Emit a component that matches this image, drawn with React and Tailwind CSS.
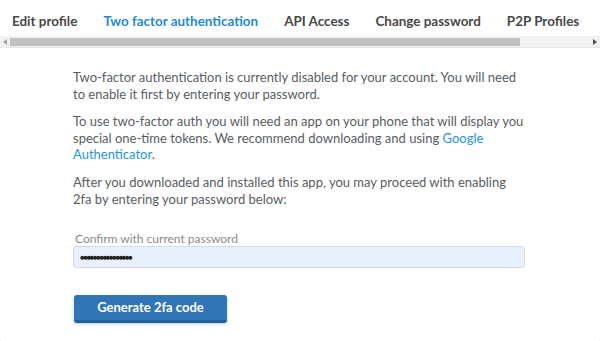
const tabs = [
  { label: "Edit profile" },
  { label: "Two factor authentication", active: true },
  { label: "API Access" },
  { label: "Change password" },
  { label: "P2P Profiles" },
];

export default function App() {
  return (
    <div className="w-[600px] h-[341px] bg-[#eeeeee] overflow-hidden" style={{ fontFamily: "Lato, 'Noto Sans', sans-serif" }}>
      <div className="h-full bg-white rounded-b-[3px] flex flex-col">
        {/* tab strip */}
        <div className="h-[36px] pt-[7px] flex items-center gap-[26px] pl-3 overflow-hidden whitespace-nowrap">
          {tabs.map((t) => (
            <span
              key={t.label}
              className={`text-[13.45px] font-bold leading-[17px] ${t.active ? "text-[#1f8ad2]" : "text-[#474747]"}`}
            >
              {t.label}
            </span>
          ))}
        </div>

        {/* fake horizontal scrollbar */}
        <div className="h-[11px] bg-[#f1f1f1] flex items-center">
          <div className="w-[10px] flex justify-center">
            <svg width="4" height="6" viewBox="0 0 4 6"><path d="M4 0 L0 3 L4 6 Z" fill="#a3a3a3" /></svg>
          </div>
          <div className="flex-1 h-[8px]">
            <div className="h-full w-[510px] bg-[#c1c1c1]" />
          </div>
          <div className="w-[10px] flex justify-center">
            <svg width="4" height="6" viewBox="0 0 4 6"><path d="M0 0 L4 3 L0 6 Z" fill="#505050" /></svg>
          </div>
        </div>
        <div className="h-px bg-[#e6e6e6]" />

        {/* body */}
        <div className="w-[454px] mx-auto pt-[21px] text-[13px] leading-[16.6px] text-[#585d63]">
          <p>
            Two-factor authentication is currently disabled for your account. You will need to enable it first by entering
            your password.
          </p>
          <p className="mt-[11px]">
            To use two-factor auth you will need an app on your phone that will display you special one-time tokens. We
            recommend downloading and using <span className="text-[#1e96dc]">Google Authenticator</span>.
          </p>
          <p className="mt-[11px]">
            After you downloaded and installed this app, you may proceed with enabling 2fa by entering your password below:
          </p>

          <label className="block mt-[25px] ml-[2px] text-[12px] leading-[14px] text-[#8a8a8a]">Confirm with current password</label>
          <div className="mt-0 w-[452px] h-[22px] rounded-[3px] border border-[#d3dbe6] bg-[#e8f0fe] flex items-center px-[6px]">
            <span className="text-[8px] leading-none tracking-[-1.6px] text-[#222]">●●●●●●●●●●●●●●●●</span>
          </div>

          <button className="mt-[27px] ml-[1px] w-[153px] h-[28px] rounded-[3px] bg-[#3175b6] border-b-[3px] border-[#23609a] text-white text-[13px] font-bold shadow-[0_1px_3px_rgba(49,117,182,0.35)]">
            Generate 2fa code
          </button>
        </div>
      </div>
    </div>
  );
}
